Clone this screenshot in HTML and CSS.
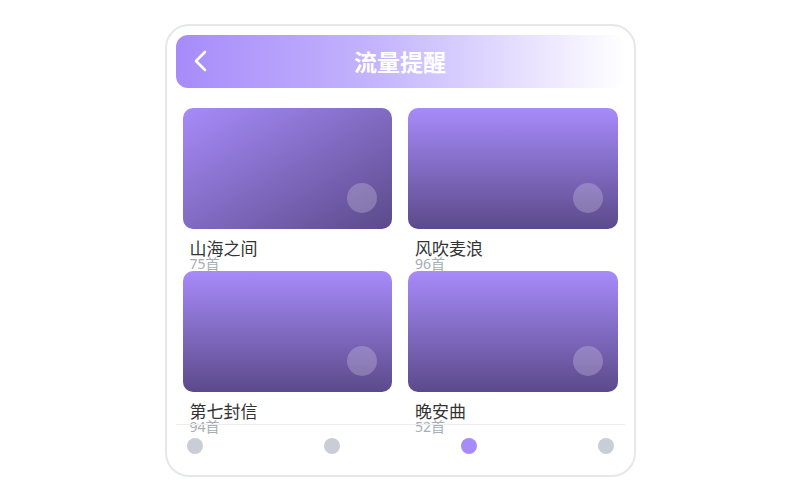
FILE: index.html
```html
<!DOCTYPE html>
<html lang="zh-CN">
<head>
    <meta charset="UTF-8">
    <meta name="viewport" content="width=device-width, initial-scale=1.0">
    <title>流量提醒</title>
    <link rel="stylesheet" href="styles.css">
</head>
<body>
    <div class="phone">
        <div class="header">
            <svg class="back" width="20" height="24" viewBox="0 0 20 24">
                <path d="M13 3 L4 12 L13 21" fill="none" stroke="#fff" stroke-width="2.6" stroke-linecap="round" stroke-linejoin="round"/>
            </svg>
            <h1>流量提醒</h1>
        </div>

        <div class="grid">
            <div class="item">
                <div class="cover diagonal"><span class="play"></span></div>
                <div class="name">山海之间</div>
                <div class="count">75首</div>
            </div>
            <div class="item">
                <div class="cover"><span class="play"></span></div>
                <div class="name">风吹麦浪</div>
                <div class="count">96首</div>
            </div>
            <div class="item">
                <div class="cover"><span class="play"></span></div>
                <div class="name">第七封信</div>
                <div class="count">94首</div>
            </div>
            <div class="item">
                <div class="cover"><span class="play"></span></div>
                <div class="name">晚安曲</div>
                <div class="count">52首</div>
            </div>
        </div>

        <div class="tabbar">
            <span class="dot"></span>
            <span class="dot"></span>
            <span class="dot active"></span>
            <span class="dot"></span>
        </div>
    </div>
</body>
</html>
```

FILE: styles.css
```css
* {
    box-sizing: border-box;
}
body {
    margin: 0;
    width: 800px;
    height: 500px;
    display: flex;
    align-items: center;
    justify-content: center;
    background: #fff;
    font-family: "Noto Sans", "Noto Sans CJK SC", sans-serif;
}
.phone {
    position: relative;
    width: 471px;
    height: 453px;
    border: 2px solid #e5e7eb;
    border-radius: 24px;
    padding: 9px 9px 0;
    overflow: hidden;
    background: #fff;
}
.header {
    position: relative;
    height: 53px;
    border-radius: 12px;
    background: linear-gradient(to right, #a78bfa, #c4b5fd 45%, #ffffff);
    display: flex;
    align-items: center;
    justify-content: center;
}
.back {
    position: absolute;
    left: 16px;
    top: 14px;
}
.header h1 {
    margin: 0;
    color: #fff;
    font-size: 23px;
    font-weight: 700;
}
.grid {
    margin-top: 20px;
    padding: 0 7px;
    display: grid;
    grid-template-columns: 1fr 1fr;
    column-gap: 16px;
}
.cover {
    position: relative;
    height: 121px;
    border-radius: 10px;
    background: linear-gradient(180deg, #a78bfa, #5b4a8a);
}
.cover.diagonal {
    background: linear-gradient(150deg, #a78bfa, #5b4a8a);
}
.play {
    position: absolute;
    right: 15px;
    bottom: 16px;
    width: 30px;
    height: 30px;
    border-radius: 50%;
    background: rgba(255, 255, 255, 0.22);
}
.name {
    margin-top: 11px;
    padding-left: 7px;
    font-size: 17px;
    line-height: 17px;
    font-weight: 400;
    color: #333;
}
.count {
    padding-left: 7px;
    font-size: 14px;
    line-height: 14px;
    color: #a8adb5;
}
.tabbar {
    position: absolute;
    left: 9px;
    right: 9px;
    bottom: 0;
    height: 51px;
    border-top: 1px solid #eceef1;
    padding: 13px 11px 0;
    display: flex;
    justify-content: space-between;
    align-items: flex-start;
}
.dot {
    width: 16px;
    height: 16px;
    border-radius: 50%;
    background: #c9ced6;
}
.dot.active {
    background: #a78bfa;
}
```
